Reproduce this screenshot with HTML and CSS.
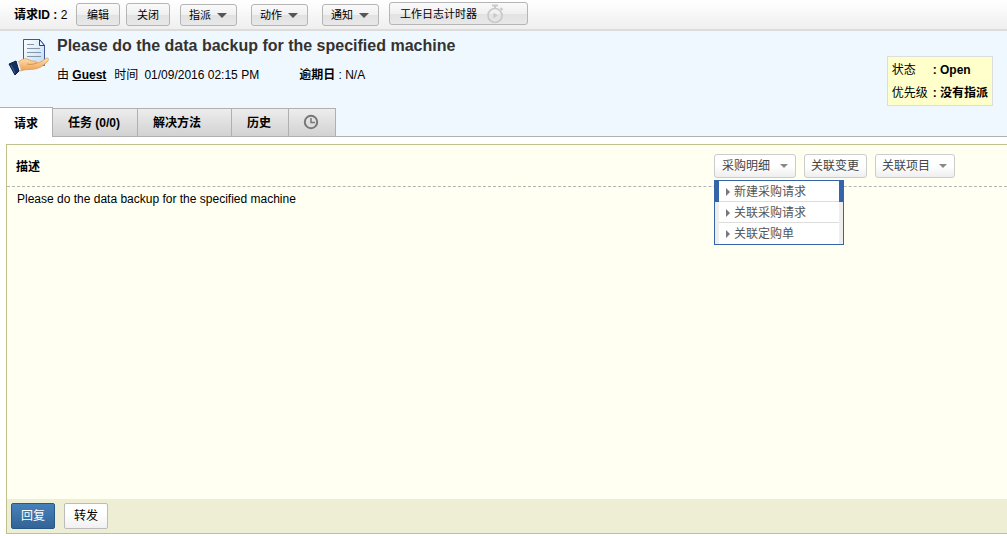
FILE: index.html
```
<!DOCTYPE html>
<html lang="zh-CN">
<head>
<meta charset="utf-8">
<title>请求 2</title>
<link rel="stylesheet" href="styles.css">
</head>
<body>
<div class="toolbar">
  <span class="request-id"><b>请求ID :</b> 2</span>
  <div class="pair">
    <button class="btn" type="button">编辑</button>
    <button class="btn" type="button">关闭</button>
  </div>
  <div class="menus">
    <button class="btn btn-menu" type="button">指派<span class="caret"></span></button>
    <button class="btn btn-menu" type="button">动作<span class="caret"></span></button>
    <button class="btn btn-menu" type="button">通知<span class="caret"></span></button>
  </div>
  <button class="btn btn-timer" type="button">工作日志计时器
    <svg class="stopwatch" width="18" height="20" viewBox="0 0 18 20" fill="none" stroke="#c9c9c9" aria-hidden="true">
      <circle cx="9" cy="11.500" r="7" stroke-width="1.700"/>
      <path d="M6 1.500h6M9 2v3M14.500 4l2 2" stroke-width="2"/>
      <path d="M7.500 8.500v6l4-3z" fill="#c9c9c9" stroke="none"/>
    </svg>
  </button>
</div>

<header class="header">
  <div class="summary">
    <svg class="request-icon" width="42" height="40" viewBox="0 0 42 40" aria-hidden="true">
      <defs>
        <linearGradient id="paper" x1="0" y1="0" x2="1" y2="1"><stop offset="0" stop-color="#fff"/><stop offset="1" stop-color="#bddcf4"/></linearGradient>
        <linearGradient id="skin" x1="0" y1="0" x2="0" y2="1"><stop offset="0" stop-color="#ffe0b4"/><stop offset="1" stop-color="#eda050"/></linearGradient>
      </defs>
      <path d="M15.500 2.500h16l5 6v20h-21z" fill="url(#paper)" stroke="#3b57a0"/>
      <path d="M31.500 2.500v6h5z" fill="#eef6ff" stroke="#25408b"/>
      <path d="M19 7.500h7M19 11.500h13M19 15.500h14M19 19.500h14" stroke="#8795aa" fill="none"/>
      <path d="M10 25c3-2 6-4 9-3l5 2c3 0 5 0 5 2 4 0 7-4 10-5 2 0 2 2 0 4-4 4-7 6-12 7-5 1-9 0-15 2z" fill="url(#skin)" stroke="#dc9348" stroke-width=".7"/>
      <path d="M19 27c4 1 7 0 10-1" fill="none" stroke="#c98442" stroke-width=".8"/>
      <path d="M7 25l3-1 3 9-3 2z" fill="#fff" stroke="#b8c9dc" stroke-width=".5"/>
      <path d="M1 27l7-3 3 10-4 4z" fill="#15325e" stroke="#0b2143"/>
      <path d="M3 28l4 8" stroke="#3b659c"/>
    </svg>
    <div class="summary-text">
      <h1 class="title">Please do the data backup for the specified machine</h1>
      <div class="meta">
        <span>由 <a class="guest" href="#guest">Guest</a></span>
        <span class="time"><span>时间</span><span>01/09/2016 02:15 PM</span></span>
        <span class="due"><b>逾期日</b> : N/A</span>
      </div>
    </div>
    <dl class="status">
      <dt>状态</dt><dd>: Open</dd>
      <dt>优先级</dt><dd>: 没有指派</dd>
    </dl>
  </div>
  <nav class="tabs">
    <a class="tab tab-active" href="#request">请求</a>
    <a class="tab tab-tasks" href="#tasks">任务 (0/0)</a>
    <a class="tab tab-resolution" href="#resolution">解决方法</a>
    <a class="tab tab-history" href="#history">历史</a>
    <a class="tab" href="#time" aria-label="时间分析">
      <svg width="16" height="16" viewBox="0 0 16 16" fill="none" stroke="#777" stroke-width="2" aria-hidden="true"><circle cx="8" cy="8" r="6.200"/><path d="M8 4v4.500h4" stroke-width="1.500"/></svg>
    </a>
  </nav>
</header>

<main class="panel">
  <div class="panel-head">
    <h2 class="panel-title">描述</h2>
    <div class="actions">
      <div class="dropdown">
        <button class="btn btn-light" type="button">采购明细<span class="caret caret-small"></span></button>
        <ul class="menu">
          <li><a class="menu-item menu-item-active" href="#new">新建采购请求</a></li>
          <li><a class="menu-item" href="#link-request">关联采购请求</a></li>
          <li><a class="menu-item" href="#link-order">关联定购单</a></li>
        </ul>
      </div>
      <button class="btn btn-light" type="button">关联变更</button>
      <button class="btn btn-light" type="button">关联项目<span class="caret caret-small"></span></button>
    </div>
  </div>
  <p class="description">Please do the data backup for the specified machine</p>
  <div class="panel-foot">
    <button class="btn btn-reply" type="button">回复</button>
    <button class="btn btn-forward" type="button">转发</button>
  </div>
</main>
</body>
</html>
```
FILE: styles.css
```
* { box-sizing: border-box; }

body {
  display: flex;
  flex-direction: column;
  min-height: 100vh;
  margin: 0;
  background: #fff;
  color: #000;
  font: 12px/16px "Liberation Sans", Arial, "Noto Sans CJK SC", sans-serif;
}

a { color: inherit; text-decoration: none; }

.toolbar {
  display: flex;
  align-items: flex-start;
  height: 31px;
  padding: 2px 14px 0;
  border-bottom: 2px solid #dcdcdc;
  background: linear-gradient(#fff, #efefef);
}

.request-id { width: 62px; padding-top: 5px; white-space: nowrap; }

.pair { display: flex; gap: 6px; padding-top: 1px; }

.menus { display: flex; gap: 14px; padding: 2px 10px 0; }

.btn {
  display: flex;
  align-items: center;
  justify-content: center;
  height: 23px;
  padding: 0 9px;
  border: 1px solid #b5b5b5;
  border-radius: 3px;
  background: linear-gradient(#fafafa, #f0f0f0 50%, #e2e2e2 51%, #e8e8e8);
  color: #000;
  font: inherit;
  white-space: nowrap;
}

.toolbar .btn { font-size: 11px; }

.pair .btn { width: 44px; }

.menus .btn { justify-content: flex-start; width: 57px; height: 22px; gap: 6px; padding: 0 8px; }

.btn-timer { justify-content: flex-start; gap: 9px; width: 139px; padding: 0 10px; }

.caret {
  border: 5px solid transparent;
  border-top-color: #555;
  border-bottom-width: 0;
}

.caret-small { border-width: 4px 4px 0; border-top-color: #888; }

.header { background: #f0f8ff; border-bottom: 1px solid #b0b0b0; }

.summary { display: flex; height: 76px; padding: 6px 14px 0 8px; }

.request-icon { flex: none; margin-right: 7px; }

.summary-text { flex: 1; }

.title { margin: 0; color: #333; font-size: 16px; line-height: 18px; }

.meta { display: flex; padding-top: 12px; white-space: nowrap; }

.guest { font-weight: bold; text-decoration: underline; }

.time { display: flex; gap: 6px; margin: 0 40px 0 8px; }

.status {
  display: grid;
  grid-template-columns: 41px auto;
  align-self: flex-start;
  margin: 19px 0 0;
  padding: 2px 4px 0;
  border: 1px solid #ddd;
  background: #ffc;
  line-height: 23px;
}

.status dt, .status dd { margin: 0; }

.status dd { font-weight: bold; }

.tabs { display: flex; align-items: flex-end; height: 29px; }

.tab {
  display: flex;
  align-items: center;
  height: 28px;
  padding: 0 15px;
  border: 1px solid #b0b0b0;
  border-width: 1px 1px 0 0;
  background: linear-gradient(#ededed, #d2d2d2);
  font-weight: bold;
}

.tab:last-child { padding: 0 16px 2px 14px; }

.tab-active {
  height: 30px;
  margin-bottom: -1px;
  padding: 2px 14px 0;
  background: #fff;
}

.tab-tasks { padding-right: 17px; }

.tab-resolution { padding-right: 30px; }

.tab-history { padding-right: 17px; }

.panel {
  display: flex;
  flex: 1;
  flex-direction: column;
  margin: 7px 0 2px 6px;
  border: 1px solid #bfc28f;
  border-right: 0;
  background: #fffff2;
}

.panel-head {
  display: flex;
  align-items: center;
  justify-content: space-between;
  height: 42px;
  padding: 0 52px 0 9px;
  border-bottom: 1px dashed #b4b4b4;
}

.panel-title { margin: 0; padding-top: 2px; font-size: 12px; line-height: 16px; }

.actions { display: flex; gap: 8px; }

.dropdown { position: relative; }

.btn-light {
  gap: 9px;
  height: 24px;
  padding: 0 7px 0 6px;
  border-color: #ccc;
  background: linear-gradient(#fff 50%, #eee);
  color: #444;
}

.dropdown .btn-light { gap: 10px; padding: 0 7px; }

.menu {
  position: absolute;
  top: 26px;
  left: 0;
  width: 130px;
  margin: 0;
  padding: 0;
  border: 1px solid #3465a9;
  background: #fff;
  list-style: none;
}

.menu-item {
  display: flex;
  align-items: center;
  gap: 4px;
  height: 21px;
  padding: 1px 0 0 7px;
  border: 4px solid #eee;
  border-width: 0 4px;
  box-shadow: inset 0 -1px #ddd;
  color: #555;
}

.menu li:last-child .menu-item { box-shadow: none; }

.menu-item::before {
  border: 4px solid transparent;
  border-left-color: #777;
  border-right-width: 0;
  content: "";
}

.menu .menu-item-active { border-color: #3465a9; }

.description { flex: 1; margin: 0; padding: 4px 10px; }

.panel-foot {
  display: flex;
  gap: 9px;
  padding: 4px;
  background: #eeeed4;
}

.panel-foot .btn { width: 44px; height: 26px; border-radius: 2px; }

.panel-foot .btn-reply {
  border-color: #285687;
  background: linear-gradient(#4781ba, #326496);
  color: #fff;
}

.panel-foot .btn-forward { border-color: #bbb; background: linear-gradient(#fff 40%, #f1f1f1); }
```
